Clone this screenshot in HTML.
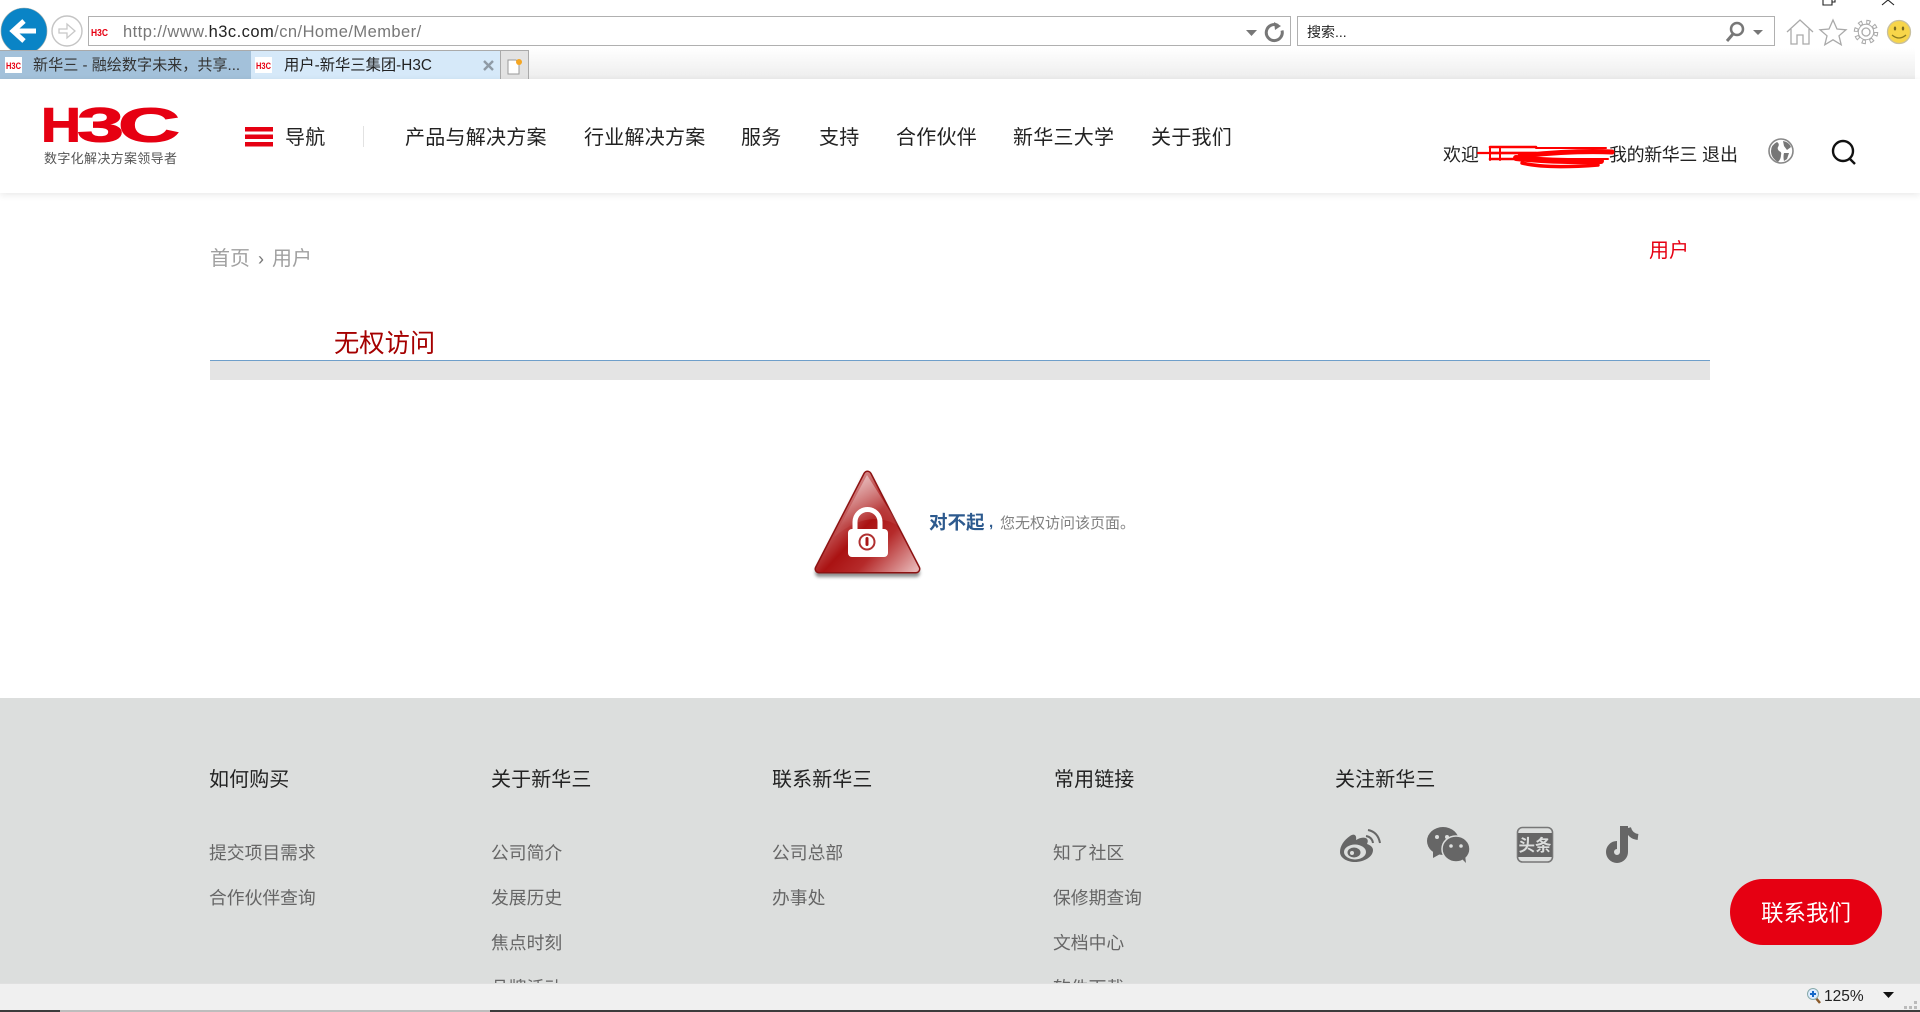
<!DOCTYPE html>
<html lang="zh-CN"><head><meta charset="utf-8"><title>用户-新华三集团-H3C</title>
<style>
html,body{margin:0;padding:0;width:1920px;height:1012px;overflow:hidden;background:#fff}
body{position:relative;font-family:"Liberation Sans","Noto Sans CJK SC",sans-serif;color:#222}
.t{position:absolute;white-space:nowrap;line-height:30px;height:30px}
.b{position:absolute}
.n{font-size:20px;top:123px;color:#222;letter-spacing:.25px}
.h{font-size:20px;top:765px;color:#222;letter-spacing:.1px}
.l{font-size:17.800px;color:#666}
svg{position:absolute;overflow:visible}
</style></head><body>

<!-- browser chrome -->
<div class="b" style="left:0;top:48px;width:1915px;height:31px;background:linear-gradient(#fff,#ededed)"></div>
<div class="b" style="left:88px;top:16px;width:1201px;height:28px;border:1px solid #b0b0b0;background:#fff"></div>
<div class="b" style="left:1297px;top:16px;width:476px;height:28px;border:1px solid #b0b0b0;background:#fff"></div>

<svg style="left:0;top:0" width="84" height="70" viewBox="0 0 84 70">
<circle cx="24" cy="31" r="23" fill="#0a84c6"/><circle cx="24" cy="31" r="23" fill="none" stroke="#9aa" stroke-width=".6"/>
<path d="M36 31H15M24 21L13 31l11 10" fill="none" stroke="#fff" stroke-width="5"/>
<circle cx="67" cy="31" r="15" fill="#fff" stroke="#c4c4c4" stroke-width="1.4"/>
<path d="M59 29h8v-5l8 7-8 7v-5h-8z" fill="none" stroke="#c8c8c8" stroke-width="1.3"/>
</svg>
<svg style="left:91px;top:26px" width="18" height="11"><text x="0" y="10" font-family="Liberation Sans" font-weight="700" font-size="10.5" fill="#e60012" textLength="17" lengthAdjust="spacingAndGlyphs">H3C</text></svg>
<div class="t" style="left:123px;top:17px;font-size:16.500px;color:#777;letter-spacing:.45px">http://www.<span style="color:#222">h3c.com</span>/cn/Home/Member/</div>
<svg style="left:1241px;top:20px" width="44" height="24"><path d="M5 10h11l-5.500 6z" fill="#777"/><path d="M37 5.500a8 8 0 1 0 4 5" fill="none" stroke="#777" stroke-width="3"/><path d="M33 2l7 4-6 4z" fill="#777"/></svg>
<div class="t" style="left:1307px;top:17px;font-size:14px;color:#222">搜索...</div>
<svg style="left:1722px;top:20px" width="44" height="24"><circle cx="15" cy="9" r="6" fill="none" stroke="#777" stroke-width="2.500"/><path d="M11 14l-6 7" stroke="#777" stroke-width="3"/><path d="M31 10h10l-5 5z" fill="#777"/></svg>

<!-- toolbar icons -->
<svg style="left:1780px;top:16px" width="140" height="34" fill="none" stroke="#aaa" stroke-width="1.300">
<path d="M7 16L20 4l13 12M11 13v15h6v-9h6v9h6V13"/>
<path d="M53 4l4 9 9 .800-7 6 2.200 9-8.200-5-8.200 5 2.200-9-7-6 9-.800z"/>
<circle cx="86" cy="16" r="10" stroke="#aaa" stroke-width="4.500" stroke-dasharray="4 3.850"/><circle cx="86" cy="16" r="8.200" fill="#aaa" stroke="none"/>
<circle cx="86" cy="16" r="10" stroke="#fff" stroke-width="2.400" stroke-dasharray="2 5.850" stroke-dashoffset="-1"/><circle cx="86" cy="16" r="7.200" fill="#fff" stroke="none"/>
<circle cx="86" cy="16" r="4"/>
<circle cx="119" cy="16" r="11.500" fill="#f7d54a" stroke="#c8c0a0"/><ellipse cx="115" cy="12.500" rx="1.200" ry="2" fill="#7a6a20" stroke="none"/><ellipse cx="123" cy="12.500" rx="1.200" ry="2" fill="#7a6a20" stroke="none"/><path d="M112 19q7 6 14 0" stroke="#8a7a20"/>
</svg>
<svg style="left:1820px;top:0" width="90" height="8" fill="none" stroke="#222" stroke-width="1.100"><path d="M3 0v5h9V0M12 2h3V0"/><path d="M62 5l6-5 6 5"/></svg>

<!-- tabs -->
<div class="b" style="left:0;top:50px;width:529px;height:1px;background:#aaa"></div>
<div class="b" style="left:0;top:51px;width:251px;height:28px;background:#a3c1da"></div>
<div class="b" style="left:251px;top:51px;width:249px;height:28px;background:#d6e9f9"></div>
<div class="b" style="left:500px;top:51px;height:28px;background:#e3e3e3;border-right:1px solid #aaa;border-left:1px solid #aaa;width:27px"></div>
<div class="b" style="left:5px;top:57px;width:17px;height:16px;background:#fff"></div>
<div class="b" style="left:255px;top:57px;width:17px;height:16px;background:#fff"></div>
<svg style="left:5px;top:60px" width="270" height="12" font-family="Liberation Sans" font-weight="700" font-size="9.500" fill="#e60012"><text x="1" y="9" textLength="15" lengthAdjust="spacingAndGlyphs">H3C</text><text x="251" y="9" textLength="15" lengthAdjust="spacingAndGlyphs">H3C</text></svg>
<div class="t" style="left:33px;top:51px;font-size:15.100px;color:#333">新华三 - 融绘数字未来，共享...</div>
<div class="t" style="left:284px;top:51px;font-size:15.300px;color:#222">用户-新华三集团-H3C</div>
<svg style="left:482px;top:59px" width="48" height="16"><path d="M2 2l9 9M11 2l-9 9" stroke="#8f9aa5" stroke-width="2.400"/><path d="M26 3h8l3 3v11H26z" transform="translate(0,-2)" fill="#fff" stroke="#999"/><circle cx="37" cy="3" r="3" fill="#f5a623"/></svg>

<!-- header -->
<div class="b" style="left:0;top:79px;width:1920px;height:114px;background:#fff;box-shadow:0 2px 7px rgba(0,0,0,.09)"></div>
<svg style="left:44px;top:104px" width="134" height="40" font-family="Liberation Sans" font-weight="700" font-size="48" fill="#e60012" stroke="#e60012" stroke-width="1">
<text x="-3" y="37.500" textLength="40" lengthAdjust="spacingAndGlyphs">H</text>
<text x="33" y="37.500" textLength="47" lengthAdjust="spacingAndGlyphs">3</text>
<text x="74" y="37.500" textLength="62" lengthAdjust="spacingAndGlyphs">C</text>
</svg>
<div class="t" style="left:44px;top:144px;font-size:13px;color:#555;letter-spacing:.33px">数字化解决方案领导者</div>
<svg style="left:245px;top:127px" width="28" height="20" fill="#e60012"><rect width="28" height="4.500"/><rect y="7.500" width="28" height="4.500"/><rect y="15" width="28" height="4.500"/></svg>
<div class="t n" style="left:285px">导航</div>
<div class="b" style="left:363px;top:126px;width:1px;height:21px;background:#e2e2e2"></div>
<div class="t n" style="left:405px">产品与解决方案</div>
<div class="t n" style="left:584px">行业解决方案</div>
<div class="t n" style="left:741px">服务</div>
<div class="t n" style="left:819px">支持</div>
<div class="t n" style="left:896px">合作伙伴</div>
<div class="t n" style="left:1013px">新华三大学</div>
<div class="t n" style="left:1151px">关于我们</div>
<div class="t" style="left:1443px;top:140px;font-size:18px;color:#222">欢迎</div>
<div class="t" style="left:1609px;top:140px;font-size:18px;color:#222;letter-spacing:-.4px">我的新华三</div>
<div class="t" style="left:1702px;top:140px;font-size:18px;color:#222">退出</div>
<svg style="left:1476px;top:144px" width="140" height="26" fill="none" stroke="#f00" stroke-linecap="round">
<path d="M2 9H136" stroke-width="2.200"/><path d="M14 3H60M14 9H60M14 15H60" stroke-width="2.600"/><path d="M14 4V16M24 4V16" stroke-width="2"/><path d="M60 4H130M60 15H132" stroke-width="2"/>
<path d="M44 12Q100 6 136 8" stroke-width="5"/><path d="M40 14Q80 18 125 17" stroke-width="6"/><path d="M46 19Q70 25 122 21" stroke-width="3.500"/>
</svg>
<svg style="left:1768px;top:138px" width="28" height="26"><circle cx="13" cy="13" r="12" fill="#fff" stroke="#888" stroke-width="1.600"/><path d="M3 13Q3 7 9 4q3 2 1 5-1 2 1 4 3 1 2 4 0 4-3 7Q3 20 3 13zM15 3q6 1 8 6l-4 3-3-4zM16 15h5l-2 6-3 2q-1-4 0-8z" fill="#777"/></svg>
<svg style="left:1830px;top:139px" width="28" height="26" fill="none" stroke="#111" stroke-width="2.400"><circle cx="13" cy="12" r="10"/><path d="M19 19l6 6"/></svg>

<!-- breadcrumb -->
<div class="t" style="left:210px;top:244px;font-size:20px;color:#a0a0a0">首页</div>
<div class="t" style="left:258px;top:244px;font-size:18px;color:#777">›</div>
<div class="t" style="left:272px;top:244px;font-size:20px;color:#a0a0a0">用户</div>
<div class="t" style="left:1649px;top:236px;font-size:20px;color:#e60012">用户</div>
<div class="t" style="left:334px;top:329px;font-size:25.300px;color:#a50000">无权访问</div>
<div class="b" style="left:210px;top:360px;width:1500px;height:20px;background:#e4e4e4;border-top:1px solid #6f9fca;box-sizing:border-box"></div>

<!-- lock -->
<svg style="left:810px;top:465px" width="115" height="118" viewBox="0 0 115 118">
<defs>
<linearGradient id="g" gradientUnits="userSpaceOnUse" x1="25" y1="30" x2="105" y2="105"><stop offset="0" stop-color="#dc9a9a"/><stop offset=".4" stop-color="#aa1212"/><stop offset=".62" stop-color="#b52a2a"/><stop offset="1" stop-color="#e6b4b4"/></linearGradient>
<linearGradient id="g2" gradientUnits="userSpaceOnUse" x1="57" y1="10" x2="57" y2="60"><stop offset="0" stop-color="#fff" stop-opacity=".45"/><stop offset="1" stop-color="#fff" stop-opacity=".05"/></linearGradient>
<filter id="s"><feGaussianBlur stdDeviation="1.500"/></filter>
</defs>
<path d="M57.500 10L9 105H106z" transform="translate(0,3)" fill="#444" opacity=".6" stroke="#444" stroke-width="8" stroke-linejoin="round" filter="url(#s)"/>
<path d="M57.500 10L9 104H106z" fill="#8d1212" stroke="#8d1212" stroke-width="9" stroke-linejoin="round"/>
<path d="M57.500 10L9 104H106z" fill="url(#g)" stroke="url(#g)" stroke-width="6" stroke-linejoin="round"/>
<path d="M57 10L24 72Q60 42 90 62z" fill="url(#g2)"/>
<path d="M45 66V57a12.500 12.500 0 0 1 25 0v9" fill="none" stroke="#fff" stroke-width="5"/>
<rect x="38" y="64" width="40" height="28" rx="4" fill="#fff"/>
<circle cx="57" cy="77" r="7.500" fill="none" stroke="#b03030" stroke-width="2"/>
<rect x="55.500" y="72" width="3" height="9" rx="1.500" fill="#a81616"/>
</svg>
<div class="t" style="left:929px;top:508px;font-size:18.500px;font-weight:700;color:#2d5a8e">对不起</div>
<div class="t" style="left:989px;top:508px;font-size:15px;font-weight:700;color:#2d5a8e">,</div>
<div class="t" style="left:1000px;top:509px;font-size:15px;color:#808080">您无权访问该页面。</div>

<!-- footer -->
<div class="b" style="left:0;top:698px;width:1920px;height:285px;background:#dcdedd"></div>
<div class="t h" style="left:209px">如何购买</div>
<div class="t h" style="left:491px">关于新华三</div>
<div class="t h" style="left:772px">联系新华三</div>
<div class="t h" style="left:1054px">常用链接</div>
<div class="t h" style="left:1335px">关注新华三</div>

<div class="t l" style="left:209px;top:838px">提交项目需求</div>
<div class="t l" style="left:209px;top:883px">合作伙伴查询</div>
<div class="t l" style="left:491px;top:838px">公司简介</div>
<div class="t l" style="left:491px;top:883px">发展历史</div>
<div class="t l" style="left:491px;top:928px">焦点时刻</div>
<div class="t l" style="left:491px;top:973px">品牌活动</div>
<div class="t l" style="left:772px;top:838px">公司总部</div>
<div class="t l" style="left:772px;top:883px">办事处</div>
<div class="t l" style="left:1053px;top:838px">知了社区</div>
<div class="t l" style="left:1053px;top:883px">保修期查询</div>
<div class="t l" style="left:1053px;top:928px">文档中心</div>
<div class="t l" style="left:1053px;top:973px">软件下载</div>

<!-- social -->
<svg style="left:1338px;top:825px" width="46" height="40" fill="#666">
<path d="M29 19c3-6-3-8-9-5l-2 1c1-5-2-7-6-4C6 15 2 21 2 27c0 6 7 10 15 10 9 0 18-5 18-12 0-3-3-5-6-6z"/>
<ellipse cx="17" cy="27" rx="11" ry="7.500" fill="#dcdedd"/><ellipse cx="16" cy="27.500" rx="6.500" ry="5"/><circle cx="14" cy="28" r="2" fill="#dcdedd"/>
<path d="M28 11q6 1 7 7M30 5q10 2 12 13" fill="none" stroke="#666" stroke-width="2"/>
</svg>
<svg style="left:1426px;top:826px" width="46" height="38" fill="#666">
<ellipse cx="17" cy="15" rx="16" ry="14"/><path d="M7 24l0 8 9-5z"/>
<ellipse cx="30" cy="23" rx="14" ry="13" stroke="#dcdedd" stroke-width="1.500"/><path d="M35 32l5 5-1-8z"/>
<circle cx="11" cy="11" r="2" fill="#dcdedd"/><circle cx="21" cy="11" r="2" fill="#dcdedd"/><circle cx="25" cy="20" r="1.800" fill="#dcdedd"/><circle cx="35" cy="20" r="1.800" fill="#dcdedd"/>
</svg>
<svg style="left:1515px;top:825px" width="40" height="38">
<rect x="2.500" y="2.500" width="35" height="34.500" rx="5" fill="#dcdedd" stroke="#777" stroke-width="1.600"/>
<rect x="3" y="8" width="34" height="24" fill="#666"/>
<text x="20" y="26" text-anchor="middle" font-family="Noto Sans CJK SC" font-weight="700" font-size="16.500" fill="#dcdedd">头条</text>
</svg>
<svg style="left:1605px;top:825px" width="38" height="38" fill="none" stroke="#666">
<path d="M19 1v26a7 7 0 1 1-7-7" stroke-width="8"/>
<path d="M23 3q2 8 10 9" stroke-width="6"/>
</svg>

<div class="b" style="left:1730px;top:879px;width:152px;height:66px;border-radius:33px;background:#e60012"></div>
<div class="t" style="left:1730px;width:152px;text-align:center;top:899px;font-size:22.500px;color:#fff">联系我们</div>

<!-- status bar -->
<div class="b" style="left:0;top:983px;width:1920px;height:27px;background:#f0f0f0;border-top:1px solid #e0e0e0;box-sizing:border-box"></div>
<div class="b" style="left:0;top:1010px;width:60px;height:2px;background:#3c3c3c"></div>
<div class="b" style="left:60px;top:1010px;width:430px;height:2px;background:#bdbdbd"></div>
<div class="b" style="left:490px;top:1010px;width:1430px;height:2px;background:#3c3c3c"></div>
<svg style="left:1806px;top:987px" width="16" height="18"><path d="M9 10l5 6" stroke="#8a5a2a" stroke-width="2.500"/><circle cx="7" cy="7" r="5.500" fill="#dcecff" stroke="#8aa"/><path d="M4 7h6M7 4v6" stroke="#1467c8" stroke-width="2"/></svg>
<div class="t" style="left:1824px;top:982px;font-size:15.500px;color:#222">125%</div>
<svg style="left:1880px;top:990px" width="40" height="22"><path d="M3 2h11L8.500 8z" fill="#111"/><g fill="#bbb"><rect x="34" y="11" width="3" height="3"/><rect x="29" y="16" width="3" height="3"/><rect x="34" y="16" width="3" height="3"/><rect x="24" y="16" width="3" height="3"/></g></svg>
</body></html>
